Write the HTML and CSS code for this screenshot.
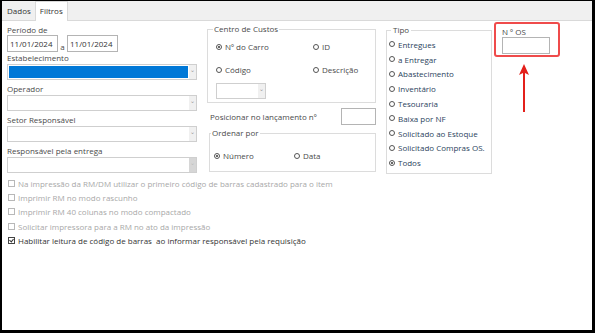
FILE: index.html
```html
<!DOCTYPE html>
<html lang="pt-BR">
<head>
    <meta charset="UTF-8">
    <title>Filtros</title>
    <link rel="stylesheet" href="styles.css">
</head>
<body>
    <div class="frame">
        <div class="tabs">
            <span class="tab">Dados</span>
            <span class="tab active">Filtros</span>
        </div>
        <div class="content">
            <div class="top">
                <div class="col-left">
                    <div class="label">Período de</div>
                    <div class="dates">
                        <span class="input date">11/01/2024</span>
                        <span class="a">a</span>
                        <span class="input date">11/01/2024</span>
                    </div>
                    <div class="label">Estabelecimento</div>
                    <div class="select"><span class="value blue"></span><span class="arrow">⌄</span></div>
                    <div class="label">Operador</div>
                    <div class="select"><span class="value"></span><span class="arrow">⌄</span></div>
                    <div class="label">Setor Responsável</div>
                    <div class="select"><span class="value"></span><span class="arrow">⌄</span></div>
                    <div class="label">Responsável pela entrega</div>
                    <div class="select disabled"><span class="value"></span><span class="arrow">⌄</span></div>
                </div>

                <div class="col-mid">
                    <fieldset class="box custos">
                        <legend>Centro de Custos</legend>
                        <div class="radio-grid">
                            <span class="opt"><i class="radio on"></i>Nº do Carro</span>
                            <span class="opt"><i class="radio"></i>ID</span>
                            <span class="opt"><i class="radio"></i>Código</span>
                            <span class="opt"><i class="radio"></i>Descrição</span>
                        </div>
                        <div class="select small"><span class="value"></span><span class="arrow">⌄</span></div>
                    </fieldset>
                    <div class="posicionar">
                        <span>Posicionar no lançamento nº</span>
                        <span class="input pos"></span>
                    </div>
                    <fieldset class="box ordenar">
                        <legend>Ordenar por</legend>
                        <div class="radio-row">
                            <span class="opt"><i class="radio on"></i>Número</span>
                            <span class="opt"><i class="radio"></i>Data</span>
                        </div>
                    </fieldset>
                </div>

                <fieldset class="box tipo">
                    <legend>Tipo</legend>
                    <span class="opt"><i class="radio"></i>Entregues</span>
                    <span class="opt"><i class="radio"></i>a Entregar</span>
                    <span class="opt"><i class="radio"></i>Abastecimento</span>
                    <span class="opt"><i class="radio"></i>Inventário</span>
                    <span class="opt"><i class="radio"></i>Tesouraria</span>
                    <span class="opt"><i class="radio"></i>Baixa por NF</span>
                    <span class="opt"><i class="radio"></i>Solicitado ao Estoque</span>
                    <span class="opt"><i class="radio"></i>Solicitado Compras OS.</span>
                    <span class="opt"><i class="radio on"></i>Todos</span>
                </fieldset>

                <div class="col-os">
                    <div class="highlight">
                        <div class="label">N º OS</div>
                        <span class="input os"></span>
                    </div>
                    <svg class="arrow-up" width="12" height="50" viewBox="0 0 12 50">
                        <path d="M6 1 L11 12 L7 10 L7 49 L5 49 L5 10 L1 12 Z" fill="#e3201b"/>
                    </svg>
                </div>
            </div>

            <div class="checks">
                <div class="check off"><i class="cb"></i>Na impressão da RM/DM utilizar o primeiro código de barras cadastrado para o item</div>
                <div class="check off"><i class="cb"></i>Imprimir RM no modo rascunho</div>
                <div class="check off"><i class="cb"></i>Imprimir RM 40 colunas no modo compactado</div>
                <div class="check off"><i class="cb"></i>Solicitar impressora para a RM no ato da impressão</div>
                <div class="check"><i class="cb on"></i>Habilitar leitura de código de barras&nbsp; ao informar responsável pela requisição</div>
            </div>
        </div>
    </div>
</body>
</html>
```

FILE: styles.css
```css
* { margin: 0; padding: 0; box-sizing: border-box; }
body {
    width: 595px;
    height: 333px;
    font-family: "Open Sans", "Noto Sans", sans-serif;
    font-size: 8px;
    color: #4a4a4a;
    background: #000;
}
.frame {
    width: 595px;
    height: 333px;
    border-style: solid;
    border-color: #000;
    border-width: 1px 3px 3px 2px;
    background: #fff;
    display: flex;
    flex-direction: column;
}
.tabs {
    height: 20px;
    background: #f0f0f0;
    border-bottom: 1px solid #d9d9d9;
    display: flex;
    align-items: flex-end;
    padding-left: 1px;
}
.tab {
    height: 18px;
    line-height: 18px;
    padding: 0 4px;
    color: #333;
}
.tab.active {
    background: #fff;
    border: 1px solid #d9d9d9;
    border-bottom: none;
    height: 20px;
    margin-bottom: -1px;
    line-height: 18px;
}
.content {
    padding: 3px 0 0 3px;
}
.top {
    display: flex;
    align-items: flex-start;
}
.label {
    line-height: 11px;
}
.col-left {
    width: 192px;
}
.col-left .label { margin-top: 3px; padding-left: 2px; }
.col-left .label:first-child { margin-top: 0; }
.dates {
    display: flex;
    align-items: flex-end;
    padding-left: 2px;
    margin-bottom: -3px;
}
.input {
    display: inline-block;
    border: 1px solid #b4b4b4;
    background: #fff;
    height: 17px;
}
.date {
    width: 51px;
    line-height: 15px;
    padding-left: 2px;
    color: #333;
}
.a {
    width: 9px;
    text-align: center;
    line-height: 11px;
}
.select {
    display: flex;
    height: 16px;
    margin-left: 2px;
    border: 1px solid #cfcfcf;
    background: #fff;
    margin-top: 1px;
}
.select .value {
    flex: 1;
    margin: 1px;
}
.select .value.blue {
    background: #0078d7;
}
.select .arrow {
    width: 7px;
    background: #f0f0f0;
    color: #999;
    font-size: 6px;
    line-height: 10px;
    text-align: center;
}
.select.disabled .arrow {
    background: #d6d6d6;
    color: #bbb;
}
.col-mid {
    width: 169px;
    margin-left: 10px;
}
.box {
    border: 1px solid #dcdcdc;
    padding: 0 4px 4px 8px;
}
.box legend {
    padding: 0 1px;
    margin-left: -3px;
    line-height: 10px;
}
.custos {
    height: 79px;
}
.radio-grid {
    display: grid;
    grid-template-columns: 97px 1fr;
    row-gap: 12px;
    margin-top: 7px;
}
.opt {
    display: flex;
    align-items: center;
    line-height: 11px;
    white-space: nowrap;
}
.radio {
    width: 6px;
    height: 6px;
    border: 1px solid #555;
    border-radius: 50%;
    margin-right: 3px;
    position: relative;
}
.radio.on::after {
    content: "";
    position: absolute;
    left: 1px;
    top: 1px;
    width: 2px;
    height: 2px;
    background: #333;
    border-radius: 50%;
}
.select.small {
    width: 50px;
    margin: 8px 0 0 0;
}
.posicionar {
    display: flex;
    justify-content: space-between;
    align-items: center;
    padding-left: 3px;
    margin-top: 5px;
}
.pos {
    width: 35px;
}
.ordenar {
    height: 44px;
    margin-top: 3px;
    margin-left: 2px;
    padding-left: 4px;
}
.radio-row {
    display: flex;
    margin-top: 12px;
}
.radio-row .opt:first-child { width: 80px; }
.tipo {
    width: 106px;
    height: 149px;
    margin-left: 10px;
    margin-top: 1px;
    padding: 0 0 0 2px;
}
.tipo legend { margin-left: 2px; padding: 0 2px; }
.tipo .opt {
    height: 14.8px;
    color: #2b3f5c;
}
.tipo .opt:first-of-type { margin-top: 2px; }
.col-os {
    margin-left: 2px;
    margin-top: -2px;
    width: 66px;
    display: flex;
    flex-direction: column;
    align-items: center;
}
.highlight {
    width: 66px;
    height: 35px;
    border: 2px solid #ef4b4b;
    border-radius: 3px;
    padding: 2px 0 0 6px;
}
.os {
    width: 48px;
    height: 17px;
}
.arrow-up {
    margin-top: 6px;
    margin-left: -6px;
}
.checks {
    margin-top: 2px;
    padding-left: 3px;
}
.check {
    display: flex;
    align-items: center;
    height: 14.3px;
    white-space: nowrap;
    color: #333;
}
.check.off { color: #a8a8a8; }
.cb {
    width: 7px;
    height: 7px;
    border: 1px solid #b8b8b8;
    margin-right: 3px;
    position: relative;
}
.cb.on {
    border-color: #444;
}
.cb.on::after {
    content: "";
    position: absolute;
    left: 1px;
    top: 0;
    width: 2px;
    height: 3px;
    border-right: 1px solid #333;
    border-bottom: 1px solid #333;
    transform: rotate(40deg);
}
```
